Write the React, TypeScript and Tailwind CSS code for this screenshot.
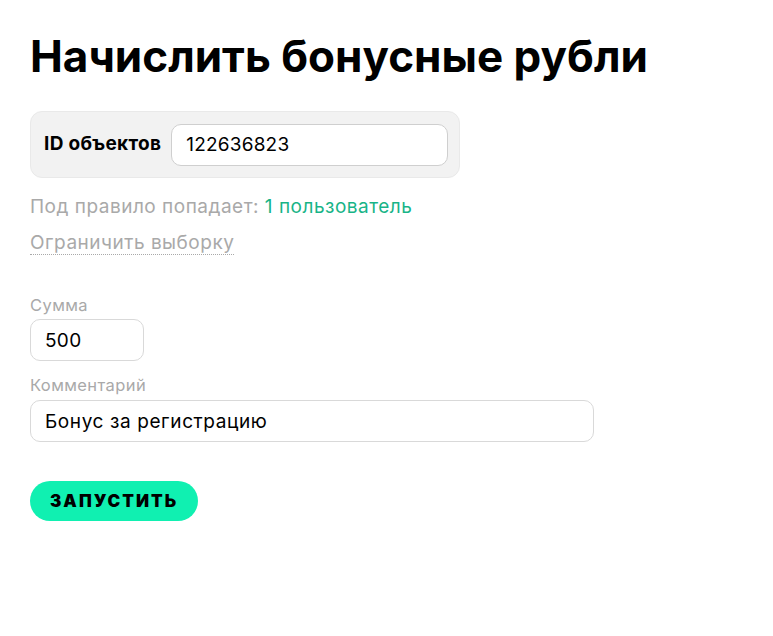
import React from "react";

const font = { fontFamily: "Inter, 'Noto Sans', sans-serif" };

export default function App() {
  return (
    <div className="min-h-screen bg-white text-black px-[30px] pt-[30px]" style={font}>
      <h1 className="text-[44px] leading-[52px] font-bold tracking-[0px] mb-[29px]">
        Начислить бонусные рубли
      </h1>

      <div className="inline-flex items-center gap-[10px] bg-[#f2f2f2] border border-[#e9e9e9] rounded-[12px] pl-[13px] pr-[11px] h-[67px] w-[430px]">
        <span className="text-[19px] font-bold tracking-[0.3px] whitespace-nowrap">ID объектов</span>
        <input
          className="flex-1 h-[42px] min-w-0 bg-white border border-[#cfcfcf] rounded-[10px] px-[14px] text-[19px] tracking-[0.2px] outline-none"
          defaultValue="122636823"
        />
      </div>

      <div className="mt-[16px] text-[19px] leading-[26px] tracking-[0.5px] text-[#a9a9a9]">
        Под правило попадает: <span className="text-[#18b487]">1 пользователь</span>
      </div>
      <div className="mt-[10px] leading-[26px]">
        <span className="text-[19px] leading-[26px] tracking-[0.5px] text-[#a9a9a9] border-b border-dotted border-[#a9a9a9]">
          Ограничить выборку
        </span>
      </div>

      <div className="mt-[38px] flex flex-col items-start">
        <label className="text-[16.5px] leading-[22px] tracking-[0.4px] text-[#a9a9a9]">Сумма</label>
        <input
          className="mt-[3px] w-[114px] h-[42px] bg-white border border-[#d9d9d9] rounded-[10px] px-[14px] text-[19px] tracking-[0.3px] outline-none"
          defaultValue="500"
        />
        <label className="mt-[13px] text-[16.5px] leading-[22px] tracking-[0.4px] text-[#a9a9a9]">Комментарий</label>
        <input
          className="mt-[4px] w-[564px] h-[42px] bg-white border border-[#d9d9d9] rounded-[10px] px-[14px] text-[19px] tracking-[0.6px] outline-none"
          defaultValue="Бонус за регистрацию"
        />
        <button className="mt-[39px] h-[40px] px-[20px] pt-[2px] rounded-full bg-[#10f0b1] text-[17px] font-black uppercase tracking-[2px] text-black">
          Запустить
        </button>
      </div>
    </div>
  );
}
